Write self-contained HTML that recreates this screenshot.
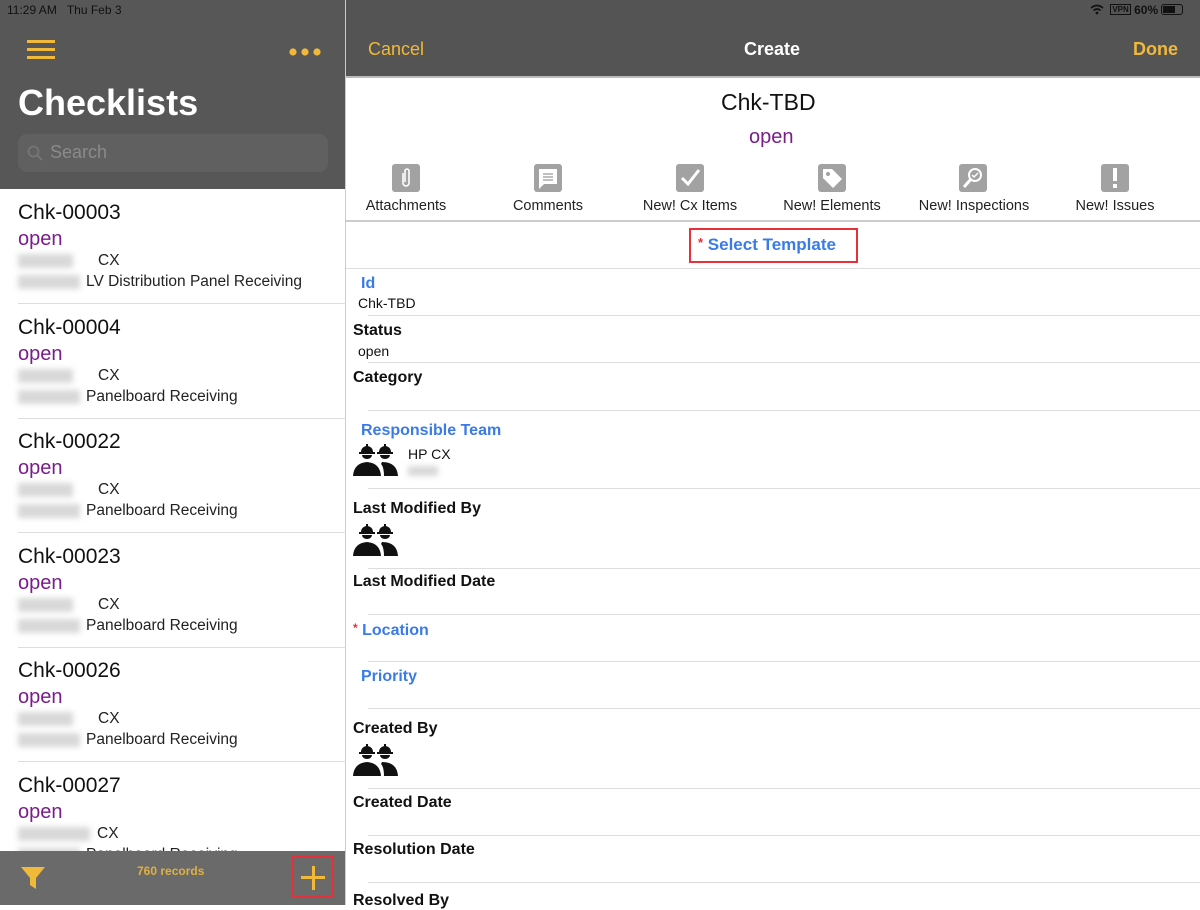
<!DOCTYPE html>
<html><head><meta charset="utf-8"><style>
*{margin:0;padding:0;box-sizing:border-box}
body{width:1200px;height:905px;overflow:hidden;position:relative;font-family:"Liberation Sans",Arial,sans-serif;background:#fff}
.a{position:absolute;white-space:nowrap}
.hdr{background:#575757}
.y{color:#f0b93a}
.blur{position:absolute;height:14px;background:#d8d8d8;filter:blur(3px)}
.ttl{font-size:21px;color:#111;left:18px}
.op{font-size:20px;color:#7a1c8c;left:18px}
.sm{font-size:15.5px;color:#222}
.sep{position:absolute;height:1px;background:#ddd}
.lb{font-size:16px;font-weight:bold;color:#111;left:353px}
.bl{font-size:16px;font-weight:bold;color:#3a7be8;left:361px}
.ic{position:absolute;width:28px;height:28px;background:#a2a2a2;border-radius:3px;top:164px}
.il{top:198px;font-size:14.5px;color:#222;transform:translateX(-50%)}
</style></head><body>
<div class="a hdr" style="left:0;top:0;width:346px;height:189px"></div>
<div class="a hdr" style="left:346px;top:0;width:854px;height:76px;background:#545454"></div>
<div class="a" style="left:346px;top:76px;width:854px;height:2px;background:#bbb"></div>
<div class="a" style="left:345px;top:0;width:1px;height:905px;background:#ccc"></div>
<div class="a" style="left:7px;top:3px;font-size:12px;color:#111">11:29 AM&nbsp;&nbsp;&nbsp;Thu Feb 3</div>
<div class="a" style="left:1090px;top:3px;font-size:12px;color:#111;font-weight:bold">
<svg width="14" height="11" viewBox="0 0 14 11" style="vertical-align:-1px"><path d="M1 4 Q7 -1 13 4" stroke="#111" stroke-width="1.6" fill="none"/><path d="M3.5 6.5 Q7 3.5 10.5 6.5" stroke="#111" stroke-width="1.6" fill="none"/><circle cx="7" cy="9" r="1.4" fill="#111"/></svg>
<span style="font-size:8px;border:1px solid #111;padding:0 1px;margin-left:3px;vertical-align:2px">VPN</span> 60%
<span style="display:inline-block;width:22px;height:11px;border:1px solid #111;border-radius:3px;vertical-align:-1px;padding:1px"><span style="display:block;width:12px;height:7px;background:#111"></span></span></div>
<div class="a" style="left:27px;top:40px;width:28px;height:3px;background:#f0b93a"></div>
<div class="a" style="left:27px;top:48px;width:28px;height:3px;background:#f0b93a"></div>
<div class="a" style="left:27px;top:56px;width:28px;height:3px;background:#f0b93a"></div>
<div class="a" style="left:289px;top:44px"><svg width="32" height="10"><circle cx="4" cy="5" r="3.6" fill="#f0b93a"/><circle cx="16" cy="5" r="3.6" fill="#f0b93a"/><circle cx="28" cy="5" r="3.6" fill="#f0b93a"/></svg></div>
<div class="a" style="left:18px;top:82px;font-size:36px;font-weight:bold;color:#fff">Checklists</div>
<div class="a" style="left:18px;top:134px;width:310px;height:38px;background:#606060;border-radius:9px"></div>
<div class="a" style="left:27px;top:145px"><svg width="16" height="16"><circle cx="6.5" cy="6.5" r="5" stroke="#777" stroke-width="1.6" fill="none"/><path d="M10 10 L15 15" stroke="#777" stroke-width="1.8"/></svg></div>
<div class="a" style="left:50px;top:142px;font-size:18px;color:#8a8a8a">Search</div>
<div id="list"></div>
<script>
var items=[["Chk-00003","LV Distribution Panel Receiving"],["Chk-00004","Panelboard Receiving"],["Chk-00022","Panelboard Receiving"],["Chk-00023","Panelboard Receiving"],["Chk-00026","Panelboard Receiving"],["Chk-00027","Panelboard Receiving"]];
var h="";items.forEach(function(it,i){var y=200+i*114.5;
h+='<div class="a ttl" style="top:'+(y+1)+'px">'+it[0]+'</div>';
h+='<div class="a op" style="top:'+(y+28)+'px">open</div>';
h+='<div class="blur" style="left:18px;top:'+(y+54)+'px;width:'+(i==5?72:55)+'px"></div>';
h+='<div class="a sm" style="left:'+(i==5?97:98)+'px;top:'+(y+52)+'px">CX</div>';
h+='<div class="blur" style="left:18px;top:'+(y+75)+'px;width:62px"></div>';
h+='<div class="a sm" style="left:86px;top:'+(y+73)+'px">'+it[1]+'</div>';
if(i<5)h+='<div class="sep" style="left:18px;width:328px;top:'+(y+103)+'px"></div>';});
document.getElementById("list").innerHTML=h;
</script>
<div class="a" style="left:0;top:851px;width:345px;height:54px;background:#6a6a6a"></div>
<div class="a" style="left:20px;top:865px"><svg width="26" height="26" viewBox="0 0 26 26"><path d="M1 2 H25 L16 13 V24 L10 20 V13 Z" fill="#f0b93a"/></svg></div>
<div class="a" style="left:137px;top:864px;font-size:12px;font-weight:bold;color:#e0b040">760 records</div>
<div class="a" style="left:292px;top:856px;width:42px;height:42px;border:2px solid #e8303a"></div>
<div class="a" style="left:301px;top:876px;width:24px;height:3px;background:#f0b93a"></div>
<div class="a" style="left:311.5px;top:866px;width:3px;height:24px;background:#f0b93a"></div>
<div class="a y" style="left:368px;top:39px;font-size:18px">Cancel</div>
<div class="a" style="left:744px;top:39px;font-size:18px;font-weight:bold;color:#fff">Create</div>
<div class="a y" style="left:1133px;top:39px;font-size:18px;font-weight:bold">Done</div>
<div class="a" style="left:721px;top:89px;font-size:23px;color:#111">Chk-TBD</div>
<div class="a" style="left:749px;top:126px;font-size:20px;color:#7a1c8c">open</div>
<div class="ic" style="left:392px"><svg width="28" height="28"><path d="M11 9 V19 a3 3 0 0 0 6 0 V7 a2 2 0 0 0 -4 0 V18" stroke="#fff" stroke-width="1.6" fill="none"/></svg></div>
<div class="ic" style="left:534px"><svg width="28" height="28"><path d="M5 5 H23 V20 H10 L5 25 Z" fill="#fff"/><path d="M9 10 H19 M9 13 H19 M9 16 H19" stroke="#999" stroke-width="1.2"/></svg></div>
<div class="ic" style="left:676px"><svg width="28" height="28"><path d="M6 14 L12 20 L23 6" stroke="#fff" stroke-width="3" fill="none"/></svg></div>
<div class="ic" style="left:818px"><svg width="28" height="28"><path d="M5 5 H14 L24 15 L15 24 L5 14 Z" fill="#fff"/><circle cx="10" cy="10" r="2" fill="#a2a2a2"/></svg></div>
<div class="ic" style="left:959px"><svg width="28" height="28"><circle cx="16" cy="11" r="6" stroke="#fff" stroke-width="2" fill="none"/><path d="M12 15 L5 23" stroke="#fff" stroke-width="3"/><path d="M13 11 L15 13 L19 9" stroke="#fff" stroke-width="1.5" fill="none"/></svg></div>
<div class="ic" style="left:1101px"><svg width="28" height="28"><rect x="12" y="4" width="4" height="13" fill="#fff"/><rect x="12" y="20" width="4" height="4" fill="#fff"/></svg></div>
<div class="a il" style="left:406px">Attachments</div>
<div class="a il" style="left:548px">Comments</div>
<div class="a il" style="left:690px">New! Cx Items</div>
<div class="a il" style="left:832px">New! Elements</div>
<div class="a il" style="left:974px">New! Inspections</div>
<div class="a il" style="left:1115px">New! Issues</div>
<div class="a" style="left:346px;top:220px;width:854px;height:2px;background:#ccc"></div>
<div class="a" style="left:689px;top:228px;width:169px;height:35px;border:2px solid #e8303a"></div>
<div class="a" style="left:698px;top:235px;font-size:17px;font-weight:bold;color:#3a7be8"><span style="color:#e8303a;font-size:13px;vertical-align:3px">*</span> Select Template</div>
<div class="sep" style="left:346px;width:854px;top:268px"></div>
<div class="a bl" style="top:275px">Id</div>
<div class="a" style="left:358px;top:295px;font-size:14px;color:#111">Chk-TBD</div>
<div class="sep" style="left:368px;width:832px;top:315px"></div>
<div class="a lb" style="top:322px">Status</div>
<div class="a" style="left:358px;top:343px;font-size:14px;color:#111">open</div>
<div class="sep" style="left:368px;width:832px;top:362px"></div>
<div class="a lb" style="top:369px">Category</div>
<div class="sep" style="left:368px;width:832px;top:410px"></div>
<div class="a bl" style="top:422px">Responsible Team</div>
<div class="a" style="left:408px;top:446px;font-size:14px;color:#111">HP CX</div>
<div class="blur" style="left:408px;top:466px;width:30px;height:10px"></div>
<div class="sep" style="left:368px;width:832px;top:488px"></div>
<div class="a lb" style="top:500px">Last Modified By</div>
<div class="sep" style="left:368px;width:832px;top:568px"></div>
<div class="a lb" style="top:573px">Last Modified Date</div>
<div class="sep" style="left:368px;width:832px;top:614px"></div>
<div class="a bl" style="left:353px;top:621px"><span style="color:#e8303a;font-size:12px;vertical-align:3px">*</span> Location</div>
<div class="sep" style="left:368px;width:832px;top:661px"></div>
<div class="a bl" style="top:668px">Priority</div>
<div class="sep" style="left:368px;width:832px;top:708px"></div>
<div class="a lb" style="top:720px">Created By</div>
<div class="sep" style="left:368px;width:832px;top:788px"></div>
<div class="a lb" style="top:794px">Created Date</div>
<div class="sep" style="left:368px;width:832px;top:835px"></div>
<div class="a lb" style="top:841px">Resolution Date</div>
<div class="sep" style="left:368px;width:832px;top:882px"></div>
<div class="a lb" style="top:892px">Resolved By</div>
<svg class="a" style="left:353px;top:443px" width="46" height="34" viewBox="0 0 46 34"><g id="w"><path d="M8 9 a6 6 0 0 1 12 0 Z" fill="#111"/><rect x="13" y="1" width="2" height="4" fill="#111"/><rect x="6" y="9" width="16" height="2" fill="#111"/><path d="M9 12 a5 4 0 0 0 10 0 Z" fill="#111"/><path d="M0 33 Q1 20 14 19 Q27 20 28 33 Z" fill="#111"/></g><path d="M26 9 a6 6 0 0 1 12 0 Z" fill="#111"/><rect x="31" y="1" width="2" height="4" fill="#111"/><rect x="24" y="9" width="16" height="2" fill="#111"/><path d="M27 12 a5 4 0 0 0 10 0 Z" fill="#111"/><path d="M29 19 Q44 19 45 33 H31 Q31 24 28 21 Z" fill="#111"/></svg>
<svg class="a" style="left:353px;top:523px" width="46" height="34" viewBox="0 0 46 34"><use href="#w"/><path d="M26 9 a6 6 0 0 1 12 0 Z" fill="#111"/><rect x="31" y="1" width="2" height="4" fill="#111"/><rect x="24" y="9" width="16" height="2" fill="#111"/><path d="M27 12 a5 4 0 0 0 10 0 Z" fill="#111"/><path d="M29 19 Q44 19 45 33 H31 Q31 24 28 21 Z" fill="#111"/></svg>
<svg class="a" style="left:353px;top:743px" width="46" height="34" viewBox="0 0 46 34"><use href="#w"/><path d="M26 9 a6 6 0 0 1 12 0 Z" fill="#111"/><rect x="31" y="1" width="2" height="4" fill="#111"/><rect x="24" y="9" width="16" height="2" fill="#111"/><path d="M27 12 a5 4 0 0 0 10 0 Z" fill="#111"/><path d="M29 19 Q44 19 45 33 H31 Q31 24 28 21 Z" fill="#111"/></svg>
</body></html>
